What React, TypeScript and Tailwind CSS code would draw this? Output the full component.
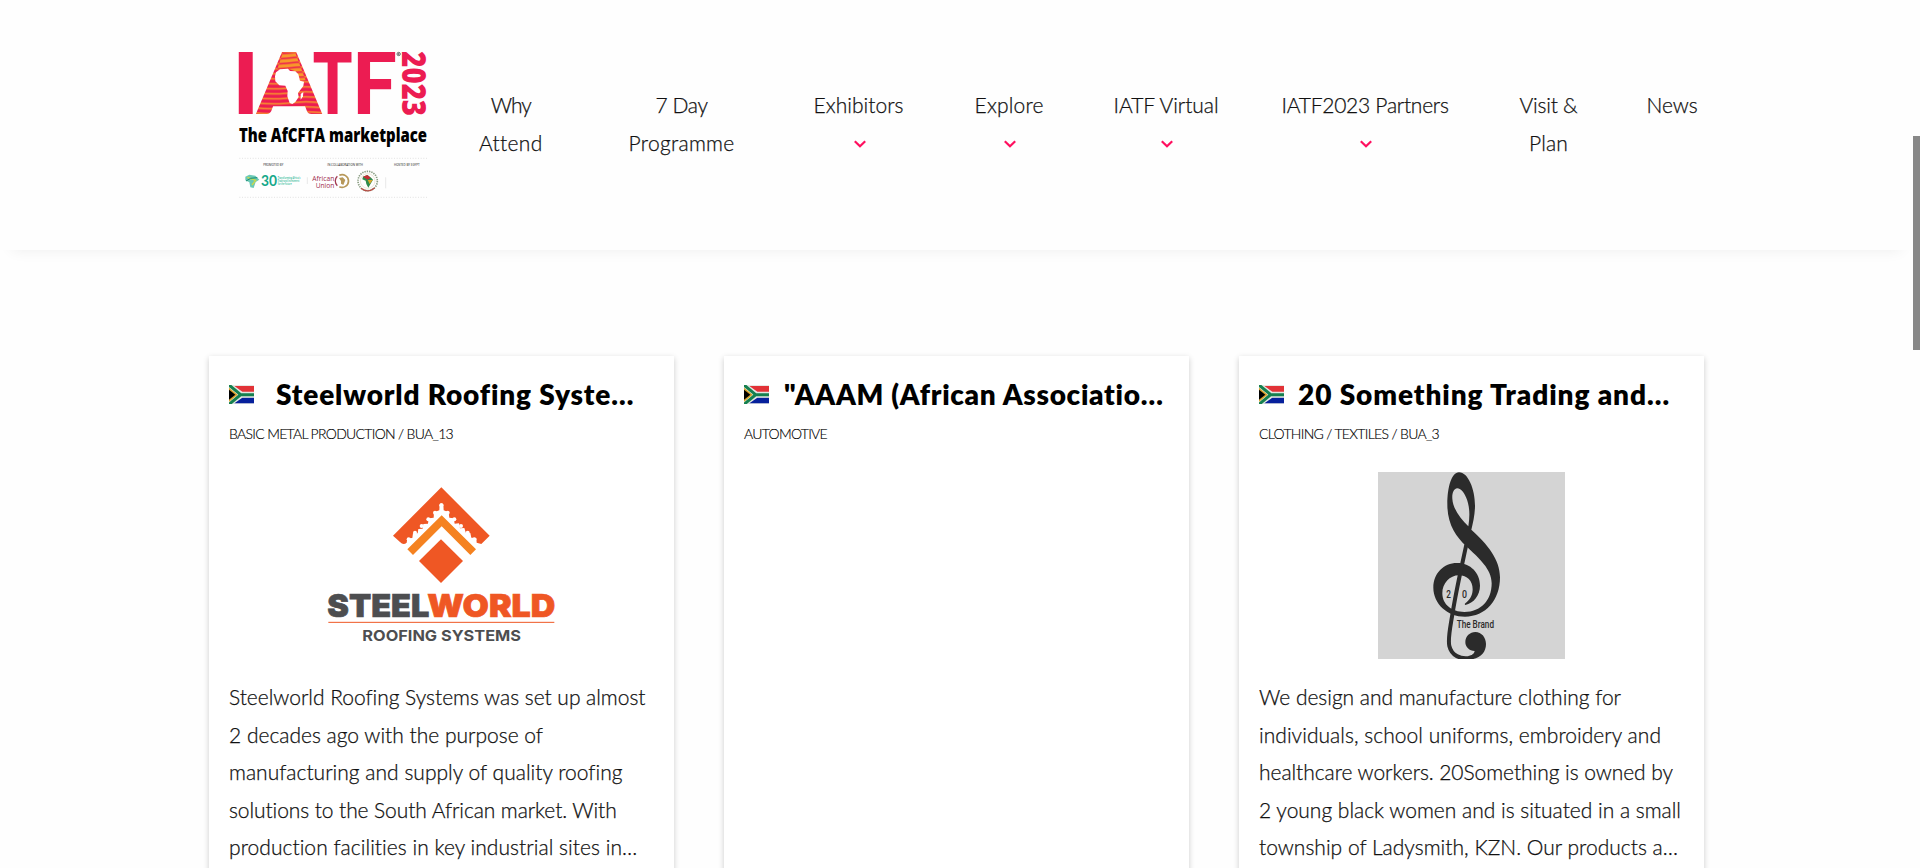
import React, { useLayoutEffect, useRef, useState } from "react";

/** A single line of text whose tracking is adjusted to fill a given width. */
function FitLine({ text, width, className = "" }: { text: string; width: number; className?: string }) {
  const ref = useRef<HTMLSpanElement>(null);
  const [tracking, setTracking] = useState(0);
  useLayoutEffect(() => {
    const el = ref.current;
    if (!el) return;
    el.style.letterSpacing = "0px";
    const natural = el.getBoundingClientRect().width;
    setTracking((width - natural) / text.length);
    el.style.letterSpacing = `${(width - natural) / text.length}px`;
  }, [text, width]);
  return (
    <span className={`block whitespace-nowrap ${className}`}>
      <span ref={ref} className="inline-block" style={{ letterSpacing: `${tracking}px` }}>
        {text}
      </span>
    </span>
  );
}

function Chevron() {
  return (
    <svg className="ml-[2px] h-[37px] w-3" viewBox="0 0 12 37" fill="none">
      <path d="M0.8 17.2 6 22.2 11.2 17.2" stroke="#ff0f5f" strokeWidth="2.2" />
    </svg>
  );
}

type NavEntry = { lines: [string, number][]; menu?: boolean; margin: string };

const nav: NavEntry[] = [
  { lines: [["Why", 40], ["Attend", 63]], margin: "" },
  { lines: [["7 Day", 52], ["Programme", 106]], margin: "ml-[86px]" },
  { lines: [["Exhibitors", 90]], menu: true, margin: "ml-[79px]" },
  { lines: [["Explore", 69]], menu: true, margin: "ml-[71px]" },
  { lines: [["IATF Virtual", 105]], menu: true, margin: "ml-[70px]" },
  { lines: [["IATF2023 Partners", 167]], menu: true, margin: "ml-[63px]" },
  { lines: [["Visit &", 58], ["Plan", 39]], margin: "ml-[71px]" },
  { lines: [["News", 51]], margin: "ml-[69px]" },
];

const letter = { lengthAdjust: "spacingAndGlyphs" as const };

function IatfLogo() {
  return (
    <svg className="h-[180px] w-[230px] shrink-0" viewBox="0 0 690 540">
      <defs>
        <pattern id="stripes" width="200" height="15" patternUnits="userSpaceOnUse" y="46">
          <rect width="200" height="15" fill="#ec1c52" />
          <path d="M0 9Q50 1 100 7T200 9" fill="none" stroke="#f8982a" strokeWidth="4.5" />
        </pattern>
        <pattern id="stripesTop" width="200" height="15" patternUnits="userSpaceOnUse" y="46">
          <rect width="200" height="15" fill="#f8982a" />
          <path d="M0 9Q50 1 100 7T200 9" fill="none" stroke="#ec1c52" strokeWidth="4" />
        </pattern>
      </defs>
      <path d="M184 95H230L258 214H156Z" fill="url(#stripes)" />
      <g fill="#ec1c52" className="font-[Lato] font-black" fontSize="258">
        <text x="35" y="238" textLength="84" {...letter}>I</text>
        <text x="110" y="238" textLength="194" fill="url(#stripes)" {...letter}>A</text>
        <text x="278" y="238" textLength="119" {...letter}>T</text>
        <text x="395" y="238" textLength="137" {...letter}>F</text>
      </g>
      <path d="M188 53 226 53 257 136 240 137 226 109 204 101 172 103Z" fill="url(#stripesTop)" />
      <path
        d="M168 112 180 103 204 101 210 108 226 109 235 118 240 137 252 140 250 153 234 174 236 186 226 201 217 207 209 204 202 184 203 168 196 152 178 151 166 139 165 124Z"
        fill="#fff"
      />
      <path d="M242 177 250 171 249 184 242 194Z" fill="#fff" />
      <circle cx="536" cy="57" r="5" fill="none" stroke="#222" strokeWidth="2" />
      <circle cx="536" cy="57" r="2" fill="#222" />
      <text
        className="font-['Open_Sans'] font-extrabold"
        fontSize="102"
        fill="#ec1c52"
        transform="translate(547 49) rotate(90)"
        textLength="194"
        {...letter}
      >
        2023
      </text>
      <text className="font-['Open_Sans'] font-extrabold" fontSize="58" x="57" y="322" textLength="564" {...letter}>
        The AfCFTA marketplace
      </text>
      <path d="M58 370H622M58 487H622" stroke="#bbb" strokeWidth="2" strokeDasharray="3 5" opacity=".6" />
      <g className="font-['Open_Sans']" fontSize="10" fill="#111">
        <text x="130" y="392" textLength="60" {...letter}>PROMOTED BY</text>
        <text x="322" y="392" textLength="107" {...letter}>IN COLLABORATION WITH</text>
        <text x="522" y="392" textLength="77" {...letter}>HOSTED BY EGYPT</text>
      </g>
      <path d="M76 425 88 419 106 422 118 434 107 441 101 459 91 457 88 442 76 436Z" fill="#6cc9b6" />
      <path d="M82 427 107 436 96 450" fill="none" stroke="#cbd94b" strokeWidth="4" />
      <path d="M78 438 92 430 112 428" fill="none" stroke="#168c73" strokeWidth="3" />
      <text className="font-[Lato] font-bold" x="123" y="454" fontSize="44" fill="#16a88a" textLength="48" {...letter}>30</text>
      <g className="font-['Open_Sans'] font-semibold" fontSize="9" fill="#2db896">
        <text x="173" y="432" textLength="68" {...letter}>Transforming Africa's</text>
        <text x="173" y="441" textLength="65" {...letter}>Trade and Investment</text>
        <text x="173" y="450" textLength="42" {...letter}>for the Future</text>
      </g>
      <path d="M262 427V447M497 427V460" stroke="#ddd" strokeWidth="2" />
      <g className="font-['Open_Sans']" fontSize="23" fill="#a02c4c">
        <text x="277" y="437" textLength="66" {...letter}>African</text>
        <text x="287" y="458" textLength="56" {...letter}>Union</text>
      </g>
      <path d="M352 424A19 19 0 0 0 352 452" fill="none" stroke="#a33b50" strokeWidth="4" />
      <path d="M358 421A19 19 0 1 1 358 455" fill="none" stroke="#b7985a" strokeWidth="5" />
      <path d="M357 429 368 427 376 435 370 450 363 446 363 438Z" fill="#b7985a" />
      <circle cx="443" cy="438" r="29" fill="none" stroke="#8a9d82" strokeWidth="5" strokeDasharray="4 3" />
      <circle cx="443" cy="438" r="22" fill="none" stroke="#e6dcc2" strokeWidth="2" />
      <path d="M429 425 442 420 454 429 459 434 451 448 445 458 439 447 437 437 427 433Z" fill="#2f8a4b" />
      <path d="M429 425 442 420 452 428 443 434Z" fill="#c52d34" />
      <path d="M443 435 458 435 449 447Z" fill="#d9a829" />
      <path d="M423 460Q443 476 464 459" fill="none" stroke="#b64d45" strokeWidth="4" />
    </svg>
  );
}

function Flag() {
  return (
    <svg className="mt-px h-[19px] w-[25px] shrink-0" viewBox="0 0 75 57">
      <rect width="75" height="57" fill="#e8e8e4" />
      <path d="M16 3H75V20H40Z" fill="#e23237" />
      <path d="M16 55H75V38H40Z" fill="#06209c" />
      <path d="M3 3 35 29 3 55M35 29H75" fill="none" stroke="#dde6e0" strokeWidth="15" />
      <path d="M0 0 35 29 0 58M34 29H75" fill="none" stroke="#15804f" strokeWidth="9" />
      <path d="M0 8 26 29 0 50Z" fill="#d9a32a" />
      <path d="M0 14 19 29 0 44Z" fill="#000" />
    </svg>
  );
}

function SteelworldLogo() {
  return (
    <svg className="mr-[3px] h-[187px] w-[260px]" viewBox="0 6 780 561">
      <path
        d="M394 52 539 197 514 222 500 218 499 204 484 203 481 189 468 190 463 174 450 175 447 160 434 161 431 145 418 143 416 127 401 121 400 102Q394 97 389 102L388 121 372 127 371 143 356 145 354 161 340 162 338 176 325 177 323 190 309 190 307 204 292 205 290 218Q280 227 270 216L249 197Z"
        fill="#ef5724"
      />
      <g fill="#fff">
        <circle cx="394" cy="106" r="6" /><circle cx="375" cy="128" r="6" /><circle cx="413" cy="128" r="6" />
        <circle cx="355" cy="148" r="6" /><circle cx="433" cy="148" r="6" /><circle cx="335" cy="168" r="6" />
        <circle cx="453" cy="168" r="6" /><circle cx="315" cy="188" r="6" /><circle cx="473" cy="188" r="6" />
        <circle cx="296" cy="208" r="6" /><circle cx="493" cy="208" r="6" />
      </g>
      <path d="M395 136 498 238 481 255 395 169 309 255 292 238Z" fill="#f58220" />
      <path d="M393 208 459 273 393 339 327 273Z" fill="#ef5724" />
      <g className="font-[Inter] font-black" fontSize="96" strokeWidth="2">
        <text x="52" y="440" fill="#4d4e50" stroke="#4d4e50" textLength="306" {...letter}>STEEL</text>
        <text x="352" y="440" fill="#ef5724" stroke="#ef5724" textLength="384" {...letter}>WORLD</text>
      </g>
      <path d="M55 457H733" stroke="#ef5724" strokeWidth="3" />
      <text className="font-[Inter] font-bold" fontSize="45" x="157" y="514" fill="#4d4e50" textLength="476" {...letter}>
        ROOFING SYSTEMS
      </text>
    </svg>
  );
}

function ClefLogo() {
  return (
    <svg className="h-[187px] w-[187px]" viewBox="24 21 561 561">
      <rect x="24" y="21" width="561" height="561" fill="#d4d4d4" />
      <path
        fillRule="evenodd"
        fill="#2b2b2b"
        d="M267 22C294 22 315 72 315 122C315 148 309 174 304 194C352 238 390 282 390 337C390 406 347 455 285 455C232 455 190 416 190 368C190 325 221 294 261 294C302 294 330 324 330 362C330 391 311 414 286 420C283 418 284 415 288 413C302 403 308 388 308 373C308 347 291 331 267 331C239 331 217 355 217 385C217 419 246 441 283 441C333 441 365 406 365 355C365 312 327 280 289 244C257 214 232 177 232 118C232 66 245 22 267 22ZM262 70C250 71 246 86 247 101C249 132 270 159 295 184C301 147 298 119 288 97C281 81 272 70 262 70Z"
      />
      <path d="M289 239C276 300 258 378 247 449C240 492 233 521 238 543C245 573 272 582 296 579C316 576 326 564 333 548" fill="none" stroke="#2b2b2b" strokeWidth="12" />
      <path d="M316 501C335 501 348 518 348 537C348 560 334 577 309 582L293 576C307 573 312 566 314 558C298 557 286 547 286 531C286 514 300 501 316 501Z" fill="#2b2b2b" />
      <g className="font-[Roboto] font-medium" fill="#2b2b2b">
        <text x="229" y="398" fontSize="31" textLength="14" {...letter}>2</text>
        <text x="276" y="398" fontSize="31" textLength="15" {...letter}>0</text>
        <text x="260" y="489" fontSize="31" textLength="112" {...letter}>The Brand</text>
      </g>
    </svg>
  );
}

type Exhibitor = {
  title: [string, number];
  titleMargin: string;
  category: [string, number];
  logo?: React.ReactNode;
  body: [string, number][];
};

const exhibitors: Exhibitor[] = [
  {
    title: ["Steelworld Roofing Syste…", 358],
    titleMargin: "ml-[22px]",
    category: ["BASIC METAL PRODUCTION / BUA_13", 224],
    logo: <SteelworldLogo />,
    body: [
      ["Steelworld Roofing Systems was set up almost", 416],
      ["2 decades ago with the purpose of", 314],
      ["manufacturing and supply of quality roofing", 393],
      ["solutions to the South African market. With", 388],
      ["production facilities in key industrial sites in…", 409],
    ],
  },
  {
    title: ["\"AAAM (African Associatio…", 380],
    titleMargin: "ml-[15px]",
    category: ["AUTOMOTIVE", 83],
    body: [],
  },
  {
    title: ["20 Something Trading and…", 372],
    titleMargin: "ml-[14px]",
    category: ["CLOTHING / TEXTILES / BUA_3", 180],
    logo: <ClefLogo />,
    body: [
      ["We design and manufacture clothing for", 362],
      ["individuals, school uniforms, embroidery and", 402],
      ["healthcare workers. 20Something is owned by", 414],
      ["2 young black women and is situated in a small", 422],
      ["township of Ladysmith, KZN. Our products a…", 419],
    ],
  },
];

function Card({ item }: { item: Exhibitor }) {
  return (
    <article className="h-[620px] w-[465px] bg-white px-5 pt-[19px] shadow-[0_2px_6px_rgba(0,0,0,0.2)]">
      <div className="flex h-[38px] items-center">
        <Flag />
        <h2 className={`text-[28px] leading-[38px] font-extrabold text-black ${item.titleMargin}`}>
          <FitLine text={item.title[0]} width={item.title[1]} />
        </h2>
      </div>
      <div className="mt-2 text-sm leading-[26px] font-light text-black [-webkit-text-stroke:0.15px_#000]">
        <FitLine text={item.category[0]} width={item.category[1]} />
      </div>
      <div className="mt-[25px] flex h-[187px] justify-center">{item.logo}</div>
      <div className="mt-[19px] text-[21px] leading-[37.5px] font-light [-webkit-text-stroke:0.25px_#111]">
        {item.body.map(([text, width]) => (
          <FitLine key={text} text={text} width={width} />
        ))}
      </div>
    </article>
  );
}

export default function App() {
  return (
    <div className="flex h-[868px] w-full overflow-hidden bg-[#fefefe] font-['Lato','Liberation_Sans',sans-serif] text-[#111]">
      <div className="min-w-0 flex-1">
        <header className="flex h-[250px] bg-[#fefefe] pt-[35px] pl-[220px] shadow-[0_12px_14px_-12px_rgba(0,0,0,0.07)]">
          <IatfLogo />
          <nav className="ml-[29px] flex pt-[51px] text-[21px] leading-[37.5px] font-light [-webkit-text-stroke:0.25px_#111]">
            {nav.map((entry) => (
              <a key={entry.lines[0][0]} className={`flex shrink-0 flex-col items-center ${entry.margin}`}>
                {entry.lines.map(([text, width]) => (
                  <FitLine key={text} text={text} width={width} />
                ))}
                {entry.menu && <Chevron />}
              </a>
            ))}
          </nav>
        </header>
        <main className="flex gap-[50px] pt-[106px] pl-[209px]">
          {exhibitors.map((item) => (
            <Card key={item.title[0]} item={item} />
          ))}
        </main>
      </div>
      <aside className="h-full w-[7px] shrink-0 pt-[136px]">
        <div className="h-[214px] bg-[#888]" />
      </aside>
    </div>
  );
}
